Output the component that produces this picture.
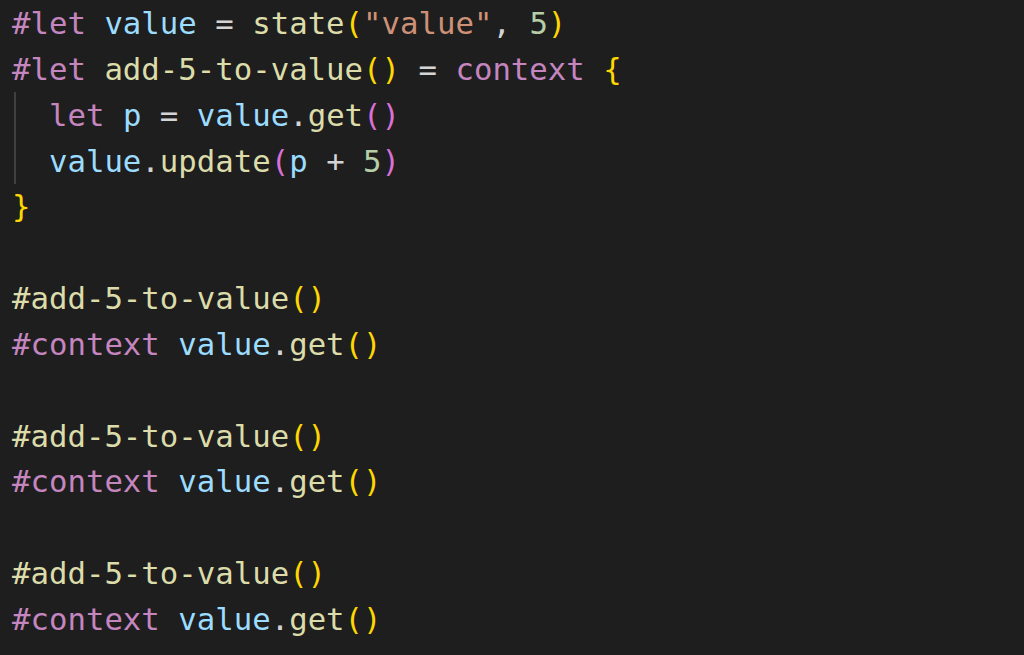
import React from 'react';

const C = {
  kw: 'text-[#c586c0]',
  v: 'text-[#9cdcfe]',
  fn: 'text-[#dcdcaa]',
  str: 'text-[#ce9178]',
  num: 'text-[#b5cea8]',
  op: 'text-[#d4d4d4]',
  b1: 'text-[#ffd700]',
  b2: 'text-[#da70d6]',
};

const lines = [
  [['#let', C.kw], [' ', C.op], ['value', C.v], [' = ', C.op], ['state', C.fn], ['(', C.b1], ['"value"', C.str], [', ', C.op], ['5', C.num], [')', C.b1]],
  [['#let', C.kw], [' ', C.op], ['add-5-to-value', C.fn], ['()', C.b1], [' = ', C.op], ['context', C.kw], [' ', C.op], ['{', C.b1]],
  [['  ', C.op], ['let', C.kw], [' ', C.op], ['p', C.v], [' = ', C.op], ['value', C.v], ['.', C.op], ['get', C.fn], ['()', C.b2]],
  [['  ', C.op], ['value', C.v], ['.', C.op], ['update', C.fn], ['(', C.b2], ['p', C.v], [' + ', C.op], ['5', C.num], [')', C.b2]],
  [['}', C.b1]],
  [],
  [['#add-5-to-value', C.fn], ['()', C.b1]],
  [['#context', C.kw], [' ', C.op], ['value', C.v], ['.', C.op], ['get', C.fn], ['()', C.b1]],
  [],
  [['#add-5-to-value', C.fn], ['()', C.b1]],
  [['#context', C.kw], [' ', C.op], ['value', C.v], ['.', C.op], ['get', C.fn], ['()', C.b1]],
  [],
  [['#add-5-to-value', C.fn], ['()', C.b1]],
  [['#context', C.kw], [' ', C.op], ['value', C.v], ['.', C.op], ['get', C.fn], ['()', C.b1]],
];

export default function App() {
  return (
    <div className="h-[655px] w-[1024px] overflow-hidden bg-[#1e1e1e] font-['DejaVu_Sans_Mono',monospace] text-[30.7px] leading-[45.85px]">
      <div className="relative mt-px pl-[12px]">
        <div className="absolute left-[14px] top-[91px] h-[92px] w-[2px] bg-[#404040]" />
        {lines.map((tokens, i) => (
          <div key={i} className="h-[45.85px] whitespace-pre">
            {tokens.map(([t, cls], j) => (
              <span key={j} className={cls}>{t}</span>
            ))}
          </div>
        ))}
      </div>
    </div>
  );
}
